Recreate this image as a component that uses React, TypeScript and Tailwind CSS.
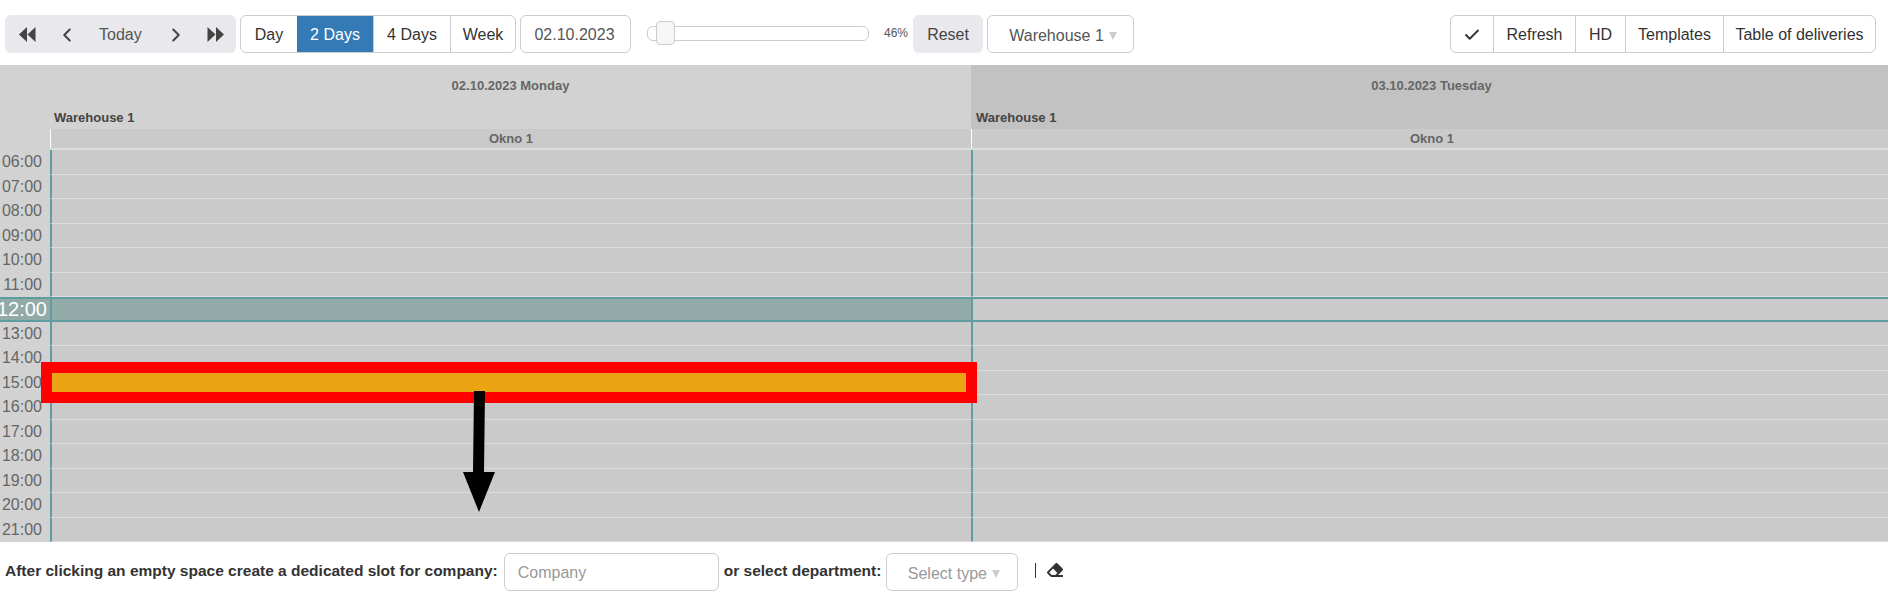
import { Check, ChevronLeft, ChevronRight } from "lucide-react";
import { FaEraser } from "react-icons/fa";

const HOURS = ["06:00", "07:00", "08:00", "09:00", "10:00", "11:00", "12:00", "13:00", "14:00", "15:00", "16:00", "17:00", "18:00", "19:00", "20:00", "21:00"];
const VIEWS = [
  { label: "Day", width: "w-[56px]" },
  { label: "2 Days", width: "w-[76px]", active: true },
  { label: "4 Days", width: "w-[77px]" },
  { label: "Week", width: "w-[65px]" },
];
const ACTIONS = [
  { label: "Refresh", width: "w-[82px]" },
  { label: "HD", width: "w-[50px]" },
  { label: "Templates", width: "w-[98px]" },
  { label: "Table of deliveries", width: "w-[152px]" },
];

function DoubleArrow({ flip }: { flip?: boolean }) {
  return (
    <svg width="17" height="15" viewBox="0 0 17 15" className={flip ? "rotate-180" : ""}>
      <path d="M8 0v15L0 7.5zM16.500 0v15L8.500 7.500z" fill="#444" />
    </svg>
  );
}

function Toolbar() {
  return (
    <div className="flex h-[65px] items-start pt-[15px] pl-[5px] pr-[12px] text-[16px] text-[#333]">
      {/* Navigation */}
      <div className="flex h-[38px] w-[231px] items-center rounded-md bg-[#e9e9ed] pt-[1px] text-[#555]">
        <span className="ml-[14px]"><DoubleArrow /></span>
        <ChevronLeft size={22} strokeWidth={2.2} className="ml-[20px] text-[#444]" />
        <span className="ml-[21px]">Today</span>
        <ChevronRight size={22} strokeWidth={2.2} className="ml-[23px] text-[#444]" />
        <span className="ml-[20px]"><DoubleArrow flip /></span>
      </div>

      <div className="ml-[4px] flex h-[38px] overflow-hidden rounded-md border border-[#ccc] pt-[1px]">
        {VIEWS.map((v, i) => (
          <div
            key={v.label}
            className={`-mt-[1px] flex items-center justify-center pt-[1px] ${v.width} ${i > 1 ? "border-l border-[#ccc]" : ""} ${v.active ? "bg-[#337ab7] text-white" : ""}`}
          >
            {v.label}
          </div>
        ))}
      </div>

      <div className="ml-[4px] flex h-[38px] w-[111px] items-center justify-center rounded-md border border-[#ccc] pt-[1px] pr-[2px] text-[#555]">
        02.10.2023
      </div>

      {/* Zoom slider */}
      <div className="relative ml-[16px] mt-[11px] h-[15px] w-[222px] rounded-md border border-[#ccc]">
        <div className="absolute left-[8px] top-[-6px] h-[24px] w-[19px] rounded border border-[#ccc] bg-[#f6f6f6]" />
      </div>
      <span className="ml-[15px] mt-[11px] text-[12px] leading-[15px] text-[#555]">46%</span>

      <div className="ml-[5px] flex h-[38px] w-[70px] items-center justify-center rounded-md bg-[#e9e9ed] pt-[1px] text-[#444]">
        Reset
      </div>

      <div className="ml-[4px] flex h-[38px] w-[147px] items-center justify-center gap-[5px] rounded-md border border-[#ccc] pt-[3px] pl-[5px] text-[#555]">
        Warehouse 1
        <span className="mt-[1px] h-0 w-0 border-x-[4px] border-t-[8px] border-x-transparent border-t-[#ccc]" />
      </div>

      <div className="ml-auto flex h-[38px] rounded-md border border-[#ccc] pt-[1px]">
        <div className="flex w-[42px] items-center justify-center">
          <Check size={18} strokeWidth={2.5} />
        </div>
        {ACTIONS.map((a) => (
          <div key={a.label} className={`-mt-[1px] flex items-center justify-center border-l border-[#ccc] pt-[1px] ${a.width}`}>
            {a.label}
          </div>
        ))}
      </div>
    </div>
  );
}

function Calendar() {
  return (
    <div className="relative h-[477px] bg-[#d2d2d2] text-[#666]">
      {/* Day headers */}
      <div className="flex h-[64px] text-[13px] font-bold">
        <div className="relative w-[971px] bg-[#d2d2d2]">
          <div className="pl-[50px] pt-[14px] text-center leading-[14px]">02.10.2023 Monday</div>
          <div className="absolute bottom-[2px] left-[54px] text-[#444]">Warehouse 1</div>
        </div>
        <div className="relative flex-1 bg-[#c2c2c2]">
          <div className="pl-[4px] pt-[14px] text-center leading-[14px]">03.10.2023 Tuesday</div>
          <div className="absolute bottom-[2px] left-[5px] text-[#444]">Warehouse 1</div>
        </div>
      </div>

      {/* Window names */}
      <div className="flex h-[19px] text-[13px] font-bold leading-[19px]">
        <div className="ml-[50px] w-[921px] border-l border-white bg-[#cacaca] text-center">Okno 1</div>
        <div className="flex-1 border-l border-white bg-[#cacaca] pl-[4px] text-center">Okno 1</div>
      </div>
      <div className="ml-[50px] h-[2px] bg-[#dcdcdc]" />

      {/* Hour rows */}
      <div className="grid h-[392px] grid-rows-[repeat(16,1fr)]">
        {HOURS.map((hour) => {
          const now = hour === "12:00";
          return (
            <div key={hour} className={`flex min-h-0 ${now ? "border-y-2 border-[#5f9ea0]" : ""}`}>
              <div
                className={`flex w-[50px] justify-end overflow-hidden whitespace-nowrap ${now ? "bg-[#92aba8] pr-[3px] text-[20px] leading-[20px] text-white" : "pr-[8px] text-[16px] leading-[24px]"}`}
              >
                {hour}
              </div>
              <div className={`w-[921px] border-l-2 border-l-[#5f9ea0] ${now ? "bg-[#92aba8]" : "border-b border-b-[#dcdcdc] bg-[#cacaca]"}`} />
              <div className={`flex-1 border-l-2 border-l-[#5f9ea0] bg-[#cacaca] ${now ? "" : "border-b border-b-[#dcdcdc]"}`} />
            </div>
          );
        })}
      </div>

      {/* Marked slot */}
      <div className="absolute left-[41px] top-[297px] h-[41px] w-[936px] border-[11px] border-[#ff0000] bg-[#eaa414]" />
      <svg className="absolute left-[460px] top-[324px]" width="40" height="126" viewBox="0 0 40 126">
        <path d="M14 2h11l-1 81h11L19 123 3 83h10z" fill="#000" />
      </svg>
    </div>
  );
}

function Footer() {
  return (
    <div className="flex h-[62px] items-start pl-[5px] pt-[11px] text-[16px] text-[#333]">
      <b className="mt-[8px] text-[15.5px] font-bold leading-[20px]">After clicking an empty space create a dedicated slot for company:</b>
      <div className="ml-[6px] flex h-[38px] w-[215px] items-center rounded-md border border-[#ccc] pl-[13px] pt-[1px] text-[#999]">
        Company
      </div>
      <b className="ml-[5px] mt-[8px] text-[15.5px] font-bold leading-[20px]">or select department:</b>
      <div className="ml-[5px] flex h-[38px] w-[132px] items-center justify-center gap-[5px] rounded-md border border-[#ccc] pl-[3px] pt-[3px] text-[#999]">
        Select type
        <span className="mt-[1px] h-0 w-0 border-x-[4px] border-t-[8px] border-x-transparent border-t-[#ccc]" />
      </div>
      <div className="ml-[17px] mt-[10px] h-[15px] w-px bg-[#333]" />
      <FaEraser size={16} className="ml-[11px] mt-[9px] text-[#333]" />
    </div>
  );
}

export default function App() {
  return (
    <div className="h-[604px] w-[1888px] overflow-hidden bg-white font-['Liberation_Sans',Arial,sans-serif]">
      <Toolbar />
      <Calendar />
      <Footer />
    </div>
  );
}
